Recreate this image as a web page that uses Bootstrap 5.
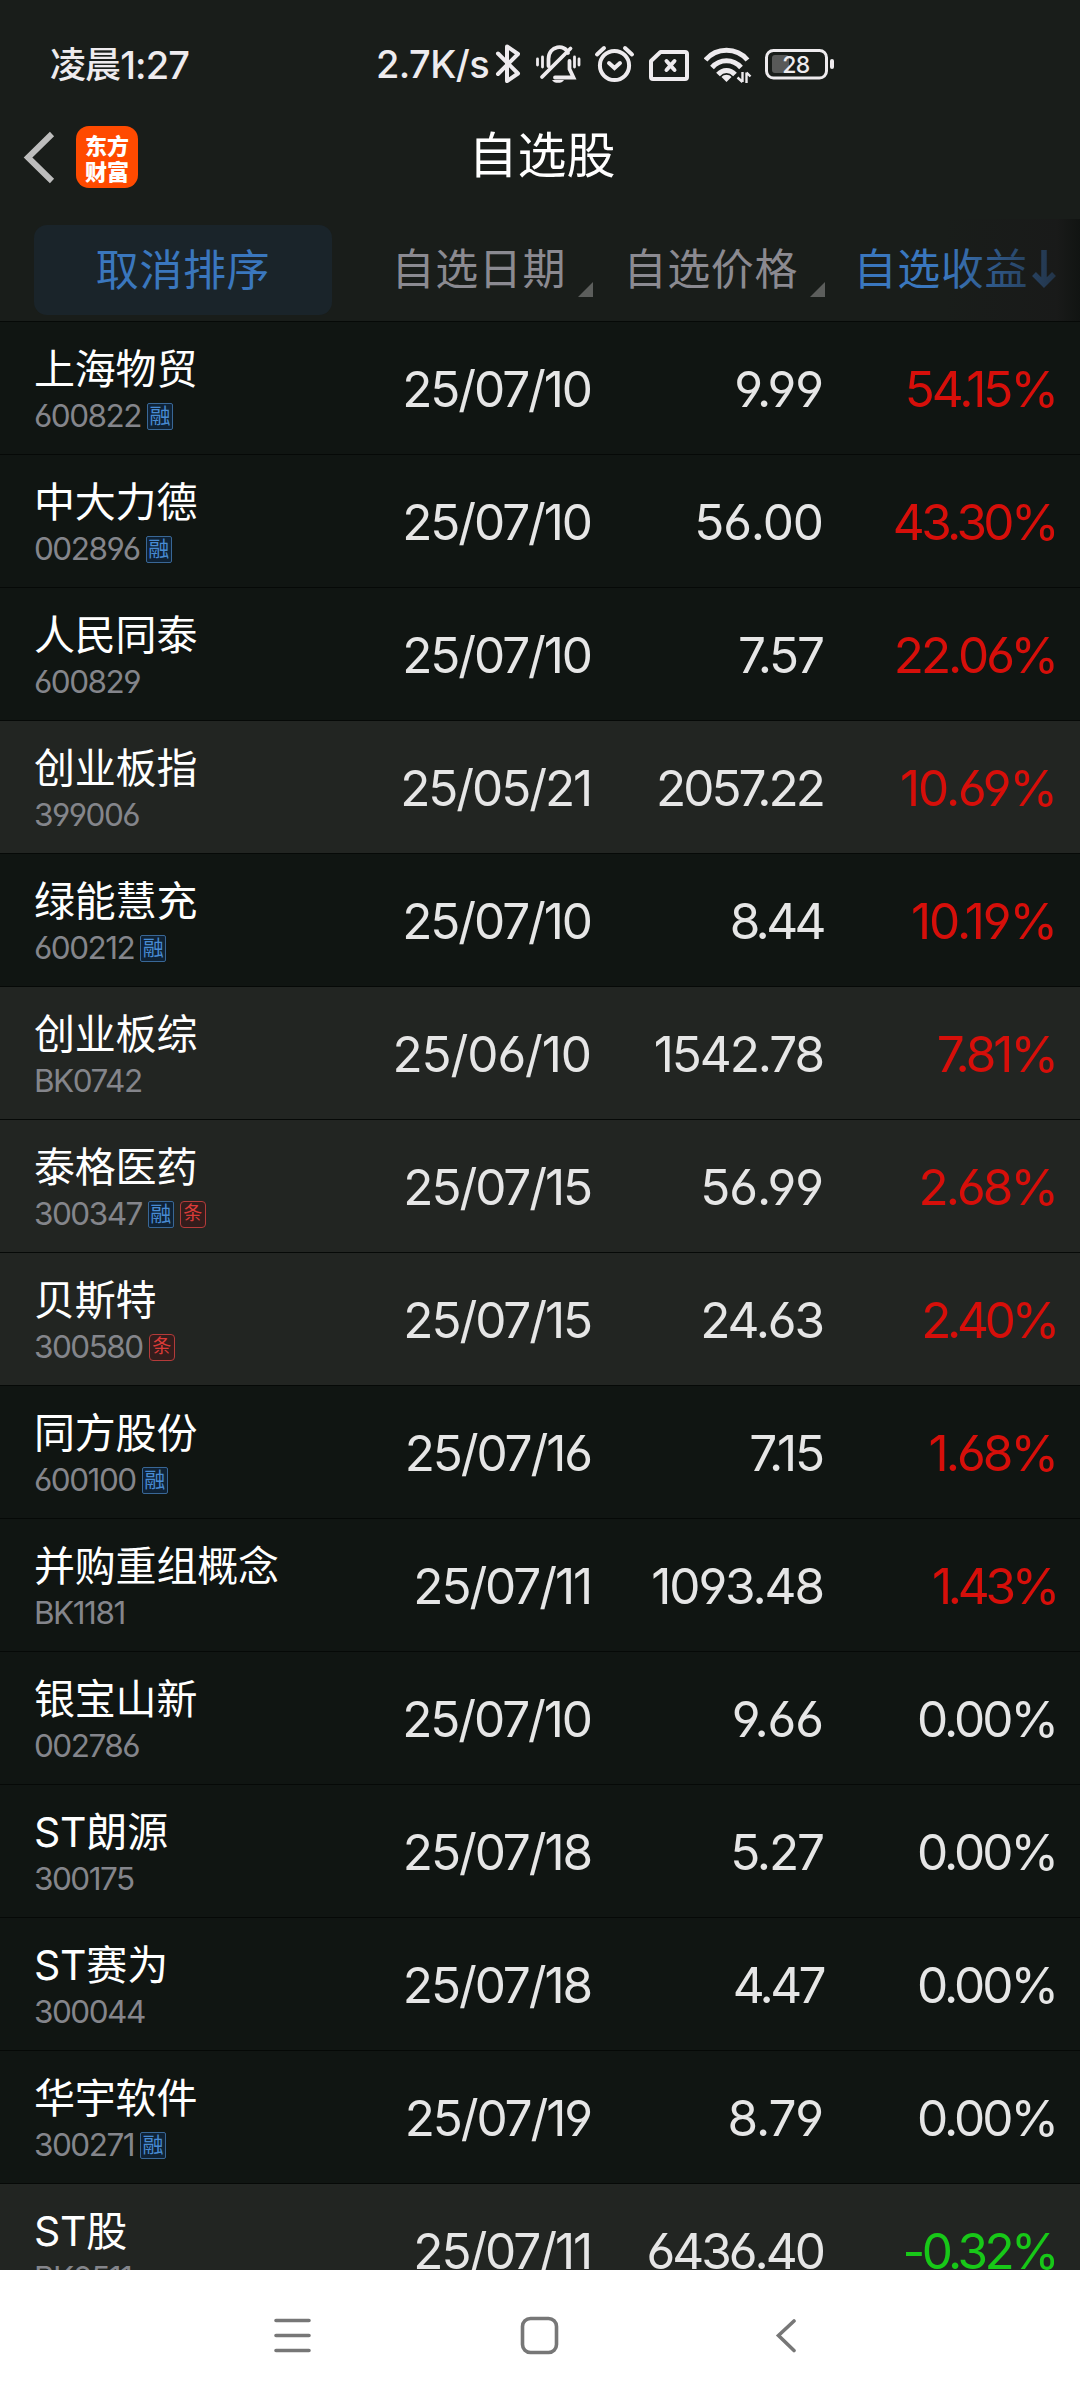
<!DOCTYPE html>
<html lang="zh-CN">
<head>
<meta charset="utf-8">
<meta name="viewport" content="width=device-width, initial-scale=1">
<title>自选股</title>
<link href="https://cdn.jsdelivr.net/npm/bootstrap@5.3.0/dist/css/bootstrap.min.css" rel="stylesheet">
<style>
body{background:#191d1a;color:#fff;font-family:Inter,"Noto Sans CJK SC",sans-serif;font-feature-settings:"cv03","cv04";line-height:1}
.phone{width:1080px;height:2400px}
.statusbar{height:106px;padding:0 0 0 50px;color:#eeebee;font-weight:500}
.clock{width:326px;font-size:36px;letter-spacing:-.9px;padding-top:46px}
.clock b{font-weight:500;font-size:38px}
.speed{width:119px;font-size:38px;padding-top:41px;letter-spacing:-.6px}
.statusbar svg{margin-top:40px}
.titlebar{height:106px;padding:0 22px 5px}
.logo{width:62px;height:62px;border-radius:13px;background:#ff4a00;font:900 22px/26px "Noto Sans CJK SC",sans-serif;margin-left:20px}
.heading{font-size:49px;font-weight:400;width:148px;margin-left:330px}
.sorthead{height:110px;border-bottom:1px solid #060907;font-size:43px;color:#8b8a91;letter-spacing:.6px}
.cancel{width:298px;height:90px;margin:13px 0 0 34px;border-radius:13px;background:#1a242a;color:#3a77be}
.hcell{padding-top:36px}
.tri{width:15px;height:15px;background:#5c5e5c;clip-path:polygon(100% 0,100% 100%,0 100%);margin:0 0 24px 12px}
.blue{color:#3a77be}
.shade{top:7px;right:0;width:136px;height:102px;background:linear-gradient(90deg,rgba(25,25,25,0),rgba(25,25,25,.5) 55%,rgba(25,25,25,.72) 83%,#111412)}
.quotes{height:1948px;background:#101512}
.quote{height:133px;border-bottom:1px solid #060907;flex:none}
.idx{background:#222522}
.who{width:330px;padding:25px 0 0 34px}
.nm{font-size:41px;line-height:44px;height:47px;letter-spacing:-.2px;white-space:nowrap}
.cd{font-size:31.5px;line-height:44px;height:44px;color:#84858b;letter-spacing:-1.5px}
.tag{width:26px;height:27px;border:1px solid #396796;border-radius:2px;background:#0f2235;color:#488bd3;font-size:21px;line-height:24px;letter-spacing:0;margin-left:6px;text-align:center;overflow:hidden}
.tag.red{border-color:#b43b3a;border-radius:4px;background:#331d1c;color:#d93b38;font-size:19px}
.num{font-size:49.5px;letter-spacing:-2.1px;color:#e6e6e6;text-align:right;padding-top:42.500px;white-space:nowrap}
.num.s1{letter-spacing:-1.1px}.num.s3{letter-spacing:-3px}.num.s4{letter-spacing:-3.6px}.num.s5{letter-spacing:-4.3px}
.c1{width:261px}.c2{width:232px}.c3{width:233px}
.up{color:#d60f0a}.down{color:#18c818}
.sysnav{height:130px;background:#fff}
</style>
</head>
<body>
<div class="phone d-flex flex-column overflow-hidden">
 <header class="statusbar d-flex align-items-start">
  <div class="clock d-flex align-items-center"><span>凌晨</span><b>1:27</b></div>
  <div class="speed"><div class="pt-1">2.7K/s</div></div>
  <svg width="41" height="48" viewBox="495 40 41 48" fill="none" stroke="#eeebee" stroke-width="4" stroke-linejoin="round" stroke-linecap="round"><path d="M498 53.500 518 73.500 507 81V46.500l11 7.500-20 20"/></svg>
  <svg width="58" height="48" viewBox="536 40 58 48" fill="none" stroke="#eeebee" stroke-width="3.800" stroke-linecap="round"><path d="M548.500 66V59c0-14 17-15 19.500-6M555 77.500H573.500L569.500 69V61M542 77 570.500 48.500"/><path d="M552 80h12c-2 3.800-10 3.800-12 0z" fill="#eeebee" stroke="none"/><path d="M537.500 59v6M542.500 57v10M574.500 57v10M579 59v6" stroke-width="2.800"/></svg>
  <svg width="55" height="48" viewBox="594 40 55 48" fill="none" stroke="#eeebee" stroke-width="4" stroke-linecap="round"><circle cx="614.500" cy="65.500" r="14.600"/><path d="m609 63 5.500 5 5.500-5M597 54.500l7-6.500M632 54.500l-7-6.500"/></svg>
  <svg width="55" height="48" viewBox="649 40 55 48" fill="none" stroke="#eeebee" stroke-width="4" stroke-linejoin="round" stroke-linecap="round"><path d="M660.500 52H685q2 0 2 2V77q0 2-2 2H653q-2 0-2-2V61zM666.500 61l8 9M674.500 61l-8 9"/></svg>
  <svg width="61" height="48" viewBox="704 40 61 48" fill="none" stroke="#eeebee" stroke-width="5"><path d="M705.500 60c11-13 31-13 42 0M712 67.500c8-9 21-9 29 0"/><path d="M718 74.500c5-5.500 12-5.500 17 0" /><path d="m721.500 77 5 5 5-5c-2.500-3-7.500-3-10 0z" fill="#eeebee" stroke="none"/><path d="M742.500 72v10m0 0-5-4.500M746.500 83V72.500m0 0 4 4" stroke-width="2.400"/></svg>
  <svg width="72" height="48" viewBox="765 40 72 48" fill="none"><rect x="766.500" y="50.500" width="60" height="27.500" rx="7" stroke="#eeebee" stroke-width="3"/><rect x="772" y="55" width="17" height="18" rx="3" fill="#585958"/><path d="M832 61v6" stroke="#eeebee" stroke-width="4" stroke-linecap="round"/><text x="796" y="73" text-anchor="middle" font-size="23" font-weight="500" letter-spacing="-.5" fill="#eeebee">28</text></svg>
 </header>
 <nav class="titlebar d-flex align-items-center">
  <svg width="34" height="54" viewBox="0 0 34 54" fill="none" stroke="#bdbdbd" stroke-width="6"><path d="M30 4 6 27.500 30 51"/></svg>
  <div class="logo d-flex flex-column align-items-center justify-content-center"><span>东方</span><span>财富</span></div>
  <h1 class="heading mb-0 text-center text-nowrap">自选股</h1>
 </nav>
 <section class="sorthead d-flex position-relative text-nowrap">
  <div class="cancel d-flex align-items-center justify-content-center">取消排序</div>
  <div class="d-flex justify-content-end align-items-end c1"><span class="mb-auto hcell">自选日期</span><i class="tri"></i></div>
  <div class="d-flex justify-content-end align-items-end c2"><span class="mb-auto hcell">自选价格</span><i class="tri"></i></div>
  <div class="hcell d-flex justify-content-end c3 blue"><span>自选收益</span><svg class="ms-1" width="26" height="46" viewBox="0 0 26 46" fill="none" stroke="#3a77be" stroke-width="5.500"><path d="M12 2V36M2 26l10 10 10-10"/></svg></div>
  <div class="shade position-absolute"></div>
 </section>
 <main class="quotes d-flex flex-column overflow-hidden">
  <div class="quote d-flex"><div class="who"><div class="nm">上海物贸</div><div class="cd d-flex align-items-center">600822<span class="tag">融</span></div></div><div class="num c1">25/07/10</div><div class="num c2 s1">9.99</div><div class="num c3 up s3">54.15%</div></div>
  <div class="quote d-flex"><div class="who"><div class="nm">中大力德</div><div class="cd d-flex align-items-center">002896<span class="tag">融</span></div></div><div class="num c1">25/07/10</div><div class="num c2 s1">56.00</div><div class="num c3 up s4">43.30%</div></div>
  <div class="quote d-flex"><div class="who"><div class="nm">人民同泰</div><div class="cd d-flex align-items-center">600829</div></div><div class="num c1">25/07/10</div><div class="num c2">7.57</div><div class="num c3 up s3">22.06%</div></div>
  <div class="quote d-flex idx"><div class="who"><div class="nm">创业板指</div><div class="cd d-flex align-items-center">399006</div></div><div class="num c1">25/05/21</div><div class="num c2 s3">2057.22</div><div class="num c3 up">10.69%</div></div>
  <div class="quote d-flex"><div class="who"><div class="nm">绿能慧充</div><div class="cd d-flex align-items-center">600212<span class="tag">融</span></div></div><div class="num c1">25/07/10</div><div class="num c2 s4">8.44</div><div class="num c3 up">10.19%</div></div>
  <div class="quote d-flex idx"><div class="who"><div class="nm">创业板综</div><div class="cd d-flex align-items-center">BK0742</div></div><div class="num c1 s1">25/06/10</div><div class="num c2">1542.78</div><div class="num c3 up s3">7.81%</div></div>
  <div class="quote d-flex idx"><div class="who"><div class="nm">泰格医药</div><div class="cd d-flex align-items-center">300347<span class="tag">融</span><span class="tag red">条</span></div></div><div class="num c1">25/07/15</div><div class="num c2 s1">56.99</div><div class="num c3 up s3">2.68%</div></div>
  <div class="quote d-flex idx"><div class="who"><div class="nm">贝斯特</div><div class="cd d-flex align-items-center">300580<span class="tag red">条</span></div></div><div class="num c1">25/07/15</div><div class="num c2">24.63</div><div class="num c3 up s5">2.40%</div></div>
  <div class="quote d-flex"><div class="who"><div class="nm">同方股份</div><div class="cd d-flex align-items-center">600100<span class="tag">融</span></div></div><div class="num c1">25/07/16</div><div class="num c2">7.15</div><div class="num c3 up s3">1.68%</div></div>
  <div class="quote d-flex"><div class="who"><div class="nm">并购重组概念</div><div class="cd d-flex align-items-center">BK1181</div></div><div class="num c1">25/07/11</div><div class="num c2">1093.48</div><div class="num c3 up s5">1.43%</div></div>
  <div class="quote d-flex"><div class="who"><div class="nm">银宝山新</div><div class="cd d-flex align-items-center">002786</div></div><div class="num c1">25/07/10</div><div class="num c2 s1">9.66</div><div class="num c3 s3">0.00%</div></div>
  <div class="quote d-flex"><div class="who"><div class="nm">ST朗源</div><div class="cd d-flex align-items-center">300175</div></div><div class="num c1">25/07/18</div><div class="num c2">5.27</div><div class="num c3 s3">0.00%</div></div>
  <div class="quote d-flex"><div class="who"><div class="nm">ST赛为</div><div class="cd d-flex align-items-center">300044</div></div><div class="num c1">25/07/18</div><div class="num c2 s4">4.47</div><div class="num c3 s3">0.00%</div></div>
  <div class="quote d-flex"><div class="who"><div class="nm">华宇软件</div><div class="cd d-flex align-items-center">300271<span class="tag">融</span></div></div><div class="num c1">25/07/19</div><div class="num c2 s1">8.79</div><div class="num c3 s3">0.00%</div></div>
  <div class="quote d-flex idx"><div class="who"><div class="nm">ST股</div><div class="cd d-flex align-items-center">BK0511</div></div><div class="num c1">25/07/11</div><div class="num c2 s3">6436.40</div><div class="num c3 down s4">-0.32%</div></div>
 </main>
 <footer class="sysnav d-flex">
  <svg width="1080" height="130" fill="none" stroke="#777" stroke-width="3.600" stroke-linecap="round"><path d="M276 50.500H309M276 65.500H309M276 80.500H309M794 51 778.500 65.500 794 80.500"/><rect x="522.500" y="48.500" width="34" height="34" rx="8"/></svg>
 </footer>
</div>
<script src="https://cdn.jsdelivr.net/npm/bootstrap@5.3.0/dist/js/bootstrap.bundle.min.js"></script>
</body>
</html>
